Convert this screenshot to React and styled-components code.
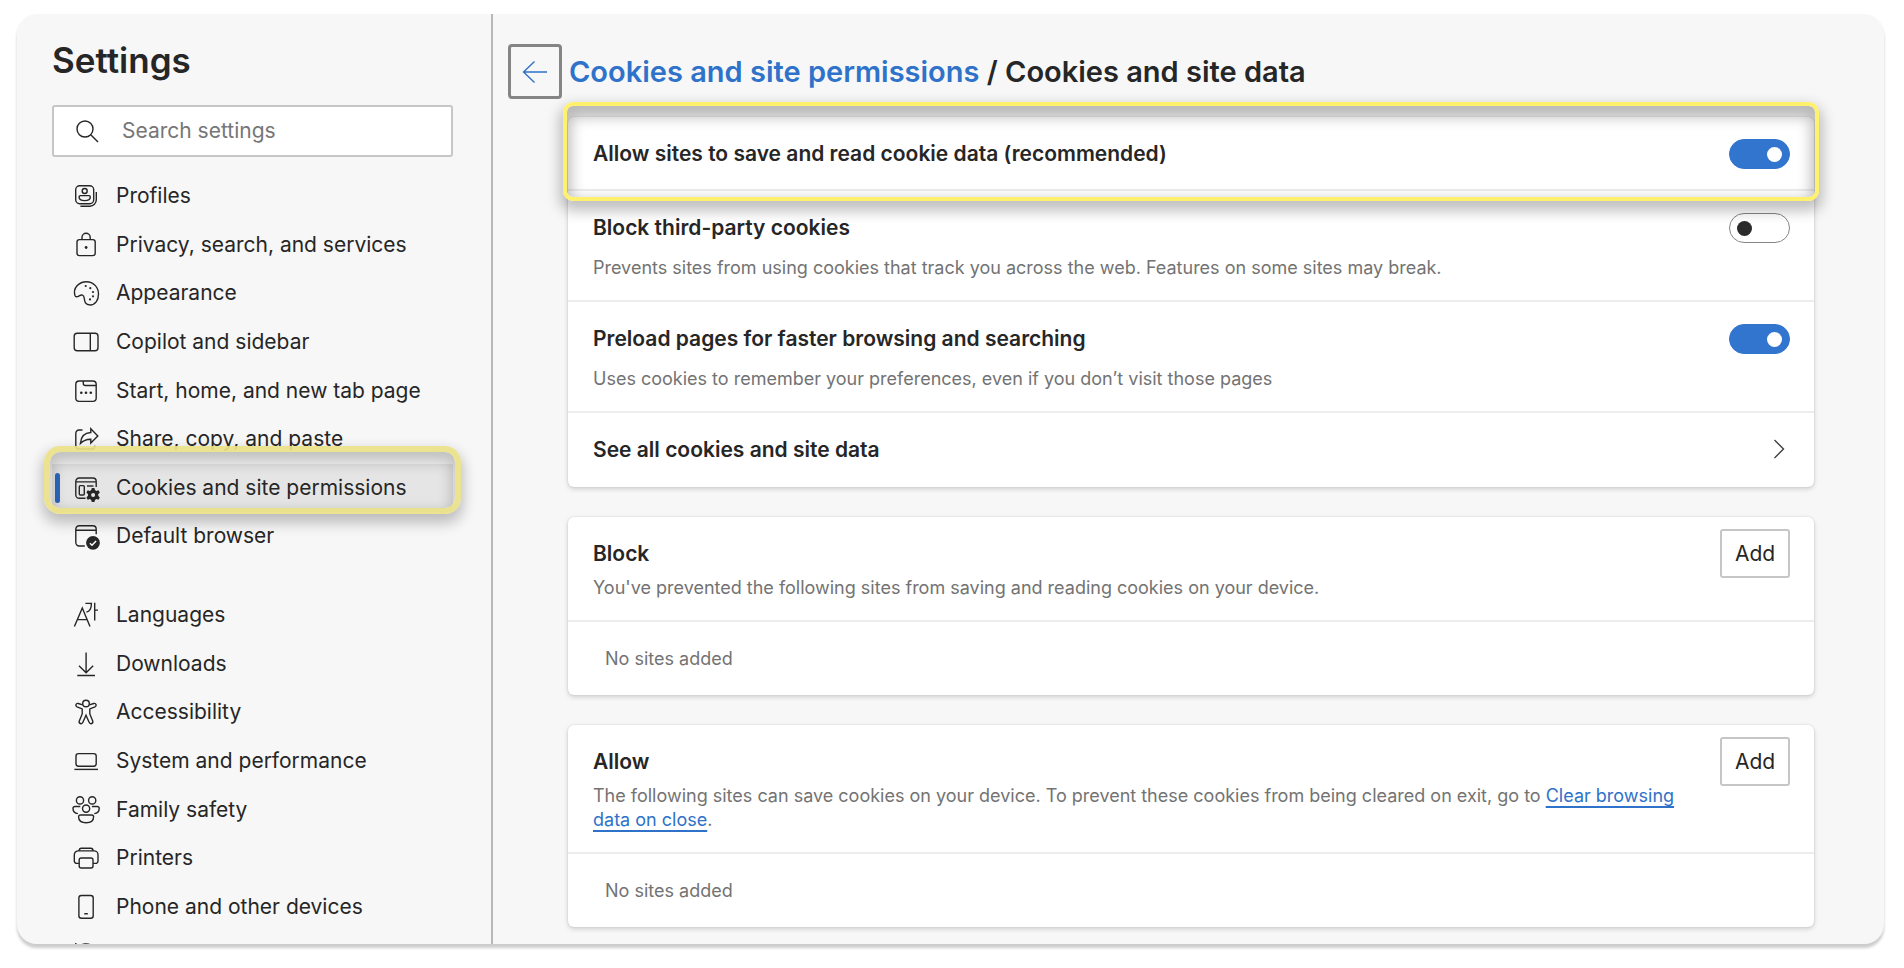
import { useState } from 'react'
import styled, { createGlobalStyle, css } from 'styled-components'

const icons = {
  search: (
    <>
      <circle cx='12' cy='12' r='8' />
      <path d='M18 18l7 7' />
    </>
  ),
  profiles: (
    <>
      <rect x='3.7' y='3.7' width='18' height='18' rx='4' />
      <path d='M24.3 10v7.8a6.4 6.4 0 0 1-6.4 6.4H8.4' />
      <circle cx='12.7' cy='9' r='2.5' />
      <path d='M8.4 13.6H17a1.3 1.3 0 0 1 1.3 1.3c0 2.4-2.4 3.7-5.6 3.7s-5.6-1.3-5.6-3.7a1.3 1.3 0 0 1 1.3-1.3z' />
    </>
  ),
  privacy: (
    <>
      <rect x='5' y='8.6' width='18.2' height='16' rx='2.4' />
      <path d='M10 8.6V6.4a4.1 4.1 0 0 1 8.2 0v2.2' />
      <circle className='dot' cx='14.1' cy='16.5' r='1.4' />
    </>
  ),
  appearance: (
    <>
      <path d='M3 16.6C.6 9 7 2.7 14.5 2.7c7 0 12 5.7 12 12.2 0 6.6-3.4 11.1-8.4 11.1-4.9 0-5.5-3.4-5.9-7-.4-3.2-2.5-3.8-5-2.2-2 1.3-3.7 1.4-4.2-.2z' />
      <circle className='dot' cx='13.7' cy='7' r='1.1' />
      <circle className='dot' cx='18.3' cy='9.2' r='1.1' />
      <circle className='dot' cx='21' cy='13' r='1.1' />
      <circle className='dot' cx='21' cy='17.3' r='1.1' />
      <circle className='dot' cx='18' cy='20.4' r='1.1' />
    </>
  ),
  sidebar: (
    <>
      <rect x='2.2' y='5.2' width='23.8' height='17.6' rx='3' />
      <path d='M18.3 5.2v17.6' />
    </>
  ),
  start: (
    <>
      <rect x='3.8' y='4' width='20.4' height='20.4' rx='3.4' />
      <path d='M11.3 4v2.5a2 2 0 0 0 2 2h10.9' />
      <circle className='dot' cx='9.3' cy='15.7' r='1.3' />
      <circle className='dot' cx='14' cy='15.7' r='1.3' />
      <circle className='dot' cx='18.8' cy='15.7' r='1.3' />
    </>
  ),
  share: (
    <>
      <path d='M10.5 5H7a3.2 3.2 0 0 0-3.2 3.2v12.6A3.2 3.2 0 0 0 7 24h12.6a3.2 3.2 0 0 0 3.2-3.2' />
      <path d='M18.8 3.8l7 7.1-7 7.1v-3.8c-4.6-.1-7.3 1.1-10.4 4.3.4-6 3.8-10.7 10.4-11z' />
    </>
  ),
  cookies: (
    <>
      <path d='M13.5 24.3H7.2a3.4 3.4 0 0 1-3.4-3.4V7.4A3.4 3.4 0 0 1 7.2 4h13.6a3.4 3.4 0 0 1 3.4 3.4v5.6M3.8 7.9h20.4' />
      <rect x='7.3' y='11.6' width='5' height='9.4' rx='1' />
      <path d='M15 12h6.5' />
      <path
        className='solid'
        fillRule='evenodd'
        d='M19.8 14h2.6l.6 2.1 1.3.8 2.2-.6 1.3 2.3-1.6 1.6v1.6l1.6 1.6-1.3 2.3-2.2-.6-1.3.8-.6 2.1h-2.6l-.6-2.1-1.3-.8-2.2.6-1.3-2.3 1.6-1.6v-1.6l-1.6-1.6 1.3-2.3 2.2.6 1.3-.8zM21.1 19a2 2 0 1 0 0 4 2 2 0 0 0 0-4z'
      />
    </>
  ),
  browser: (
    <>
      <path d='M12.8 24H7.2a3.4 3.4 0 0 1-3.4-3.4V7.2a3.4 3.4 0 0 1 3.4-3.4h13.6a3.4 3.4 0 0 1 3.4 3.4v5M3.8 8.2h20.4' />
      <circle className='solid' cx='21' cy='20.8' r='6.9' />
      <path className='check' d='M17.9 21.2l2.1 2.1 4.1-4.4' />
    </>
  ),
  languages: (
    <>
      <path d='M2.4 25.5L10.3 7 18 25.5M4.9 18.6h10.4' />
      <path d='M13.4 2.4h6c0 4.6-1.2 7.7-5 8.8M22.7 1.8v17.6M22.7 9.1H26' />
    </>
  ),
  downloads: <path d='M14.1 2.6v20M7 15.7l7.1 7 7.1-7M5.3 25.5h17.7' />,
  accessibility: (
    <>
      <circle cx='14' cy='5.5' r='3.3' />
      <path d='M10.7 6.9L6.3 5.5C4 4.9 2.8 7.8 5 8.8l5.2 2.1v5L7.3 23c-.8 2.6 2.5 3.7 3.6 1.3l3.1-7 3.1 7c1.1 2.4 4.4 1.3 3.6-1.3l-2.9-7.1v-5L23 8.8c2.2-1 1-3.9-1.3-3.3l-4.4 1.4' />
    </>
  ),
  system: (
    <>
      <rect x='4' y='6.6' width='20.2' height='12.6' rx='2.4' />
      <path d='M2.4 22.4H26' />
    </>
  ),
  family: (
    <>
      <circle cx='8' cy='4.4' r='3.6' />
      <circle cx='20.2' cy='4.4' r='3.6' />
      <circle cx='14.1' cy='12.6' r='3.6' />
      <path d='M8.3 10.5H2.9A1.9 1.9 0 0 0 1 12.4c0 3 1.7 4.7 4.9 5.2M19.9 10.5h5.4a1.9 1.9 0 0 1 1.9 1.9c0 3-1.7 4.7-4.9 5.2' />
      <path d='M8.4 19h11.4a1.8 1.8 0 0 1 1.8 1.8c0 3.7-3 6-7.5 6s-7.5-2.3-7.5-6A1.8 1.8 0 0 1 8.4 19z' />
    </>
  ),
  printers: (
    <>
      <path d='M7.2 6.9V6.4A2.2 2.2 0 0 1 9.4 4.2h9.4A2.2 2.2 0 0 1 21 6.4v.5' />
      <path d='M7.2 19.4H4.8a2.5 2.5 0 0 1-2.5-2.5v-6a4 4 0 0 1 4-4H22a4 4 0 0 1 4 4v6a2.5 2.5 0 0 1-2.5 2.5H21' />
      <rect x='7.2' y='14' width='13.8' height='10' rx='2' />
    </>
  ),
  phone: (
    <>
      <rect x='6.9' y='2.5' width='14.3' height='22.8' rx='2.5' />
      <path d='M12.3 20.8h3.5' />
    </>
  ),
  reset: <path d='M3.8 2v6.5h6.5M4.6 8.4a11 11 0 1 1-1.5 5.6' />,
  back: <path d='M26 14H2.5M13.5 3.5L2.5 14l11 10.5' />,
  chevron: <path d='M9.5 5l9 9-9 9' />,
}

const Icon = ({ name }) => (
  <Svg viewBox='0 0 28 28' aria-hidden='true'>
    {icons[name]}
  </Svg>
)

const browserLinks = [
  { icon: 'profiles', text: 'Profiles' },
  { icon: 'privacy', text: 'Privacy, search, and services' },
  { icon: 'appearance', text: 'Appearance' },
  { icon: 'sidebar', text: 'Copilot and sidebar' },
  { icon: 'start', text: 'Start, home, and new tab page' },
  { icon: 'share', text: 'Share, copy, and paste' },
  { icon: 'cookies', text: 'Cookies and site permissions', active: true },
  { icon: 'browser', text: 'Default browser' },
]

const systemLinks = [
  { icon: 'languages', text: 'Languages' },
  { icon: 'downloads', text: 'Downloads' },
  { icon: 'accessibility', text: 'Accessibility' },
  { icon: 'system', text: 'System and performance' },
  { icon: 'family', text: 'Family safety' },
  { icon: 'printers', text: 'Printers' },
  { icon: 'phone', text: 'Phone and other devices' },
  { icon: 'reset', text: 'Reset settings' },
]

const NavGroup = ({ links }) => (
  <NavList>
    {links.map(({ icon, text, active }) => (
      <li key={text}>
        <NavLink
          href='#'
          $active={active}
          aria-current={active ? 'page' : undefined}
        >
          <Icon name={icon} />
          {text}
        </NavLink>
      </li>
    ))}
  </NavList>
)

const Setting = ({ id, title, info, defaultOn = false, highlight }) => {
  const [on, setOn] = useState(defaultOn)

  return (
    <Row $highlight={highlight}>
      <RowText $gap='15px'>
        <RowTitle as='label' htmlFor={id}>
          {title}
        </RowTitle>
        {info && <Info>{info}</Info>}
      </RowText>
      <Toggle
        id={id}
        type='checkbox'
        role='switch'
        checked={on}
        onChange={(e) => setOn(e.target.checked)}
      />
    </Row>
  )
}

const SiteList = ({ title, children }) => (
  <Card>
    <Row>
      <RowText $gap='9px'>
        <RowTitle as='h2'>{title}</RowTitle>
        <Info>{children}</Info>
      </RowText>
      <AddButton type='button'>Add</AddButton>
    </Row>
    <EmptyRow>No sites added</EmptyRow>
  </Card>
)

const App = () => {
  return (
    <>
      <GlobalStyle />
      <Window>
        <Sidebar>
          <SidebarTitle>Settings</SidebarTitle>
          <SearchBox>
            <Icon name='search' />
            <input
              type='search'
              placeholder='Search settings'
              aria-label='Search settings'
            />
          </SearchBox>
          <nav>
            <NavGroup links={browserLinks} />
            <NavGroup links={systemLinks} />
          </nav>
        </Sidebar>
        <Main>
          <Header>
            <BackButton type='button' aria-label='Back'>
              <Icon name='back' />
            </BackButton>
            <h1>
              <a href='#'>Cookies and site permissions</a> / Cookies and site
              data
            </h1>
          </Header>
          <Cards>
            <Card>
              <Setting
                id='allow-cookies'
                title='Allow sites to save and read cookie data (recommended)'
                defaultOn
                highlight
              />
              <Setting
                id='third-party'
                title='Block third-party cookies'
                info='Prevents sites from using cookies that track you across the web. Features on some sites may break.'
              />
              <Setting
                id='preload'
                title='Preload pages for faster browsing and searching'
                info='Uses cookies to remember your preferences, even if you don’t visit those pages'
                defaultOn
              />
              <Row as='a' href='#'>
                <RowTitle>See all cookies and site data</RowTitle>
                <Chevron>
                  <Icon name='chevron' />
                </Chevron>
              </Row>
            </Card>
            <SiteList title='Block'>
              You've prevented the following sites from saving and reading
              cookies on your device.
            </SiteList>
            <SiteList title='Allow'>
              The following sites can save cookies on your device. To prevent
              these cookies from being cleared on exit, go to{' '}
              <a href='#'>Clear browsing data on close</a>.
            </SiteList>
          </Cards>
        </Main>
      </Window>
    </>
  )
}

const GlobalStyle = createGlobalStyle`
  *,
  *::before,
  *::after {
    box-sizing: border-box;
  }
  body {
    margin: 0;
    background: #fff;
    color: #262626;
    font-family: Inter, 'Liberation Sans', sans-serif;
    font-size: 21px;
    line-height: 26px;
  }
  h1,
  h2,
  p,
  ul {
    margin: 0;
    padding: 0;
  }
  ul {
    list-style: none;
  }
  a {
    color: inherit;
    text-decoration: none;
  }
  button,
  input {
    color: inherit;
    font: inherit;
  }
`

const Svg = styled.svg`
  flex: none;
  width: 28px;
  height: 28px;
  fill: none;
  stroke: currentColor;
  stroke-width: 1.4;
  .dot,
  .solid {
    fill: currentColor;
    stroke: none;
  }
  .check {
    stroke: #fff;
  }
`

const Window = styled.div`
  display: flex;
  height: calc(100vh - 38px);
  margin: 14px 20px 24px 17px;
  overflow: hidden;
  border-radius: 20px;
  background: #f7f7f7;
  box-shadow: 0 4px 3px rgba(0, 0, 0, 0.2);
`

const Sidebar = styled.aside`
  flex: none;
  width: 476px;
  padding: 26px 38px 0 35px;
  border-right: 2px solid #b8b8b8;
`

const SidebarTitle = styled.h2`
  margin-bottom: 25px;
  font-size: 35px;
  font-weight: 600;
  line-height: 40px;
`

const SearchBox = styled.label`
  display: flex;
  align-items: center;
  gap: 21px;
  height: 52px;
  margin-bottom: 15px;
  padding: 0 19px;
  border: 2px solid #c6c6c6;
  border-radius: 3px;
  background: #fff;
  input {
    flex: 1;
    min-width: 0;
    padding: 0;
    border: none;
    outline: none;
    background: transparent;
  }
  input::placeholder {
    color: #767676;
    opacity: 1;
  }
`

const NavList = styled.ul`
  display: grid;
  grid-auto-rows: 1fr;
  min-height: 389px;
  & + & {
    margin-top: 30px;
  }
`

const NavLink = styled.a`
  position: relative;
  display: flex;
  align-items: center;
  gap: 16px;
  height: 48px;
  padding-left: 20px;
  ${({ $active }) =>
    $active &&
    css`
      background: #e5e5e5;
      &::before {
        content: '';
        position: absolute;
        top: 9px;
        left: 3px;
        width: 5px;
        height: 30px;
        border-radius: 3px;
        background: #2a68bd;
      }
      &::after {
        content: '';
        position: absolute;
        z-index: 1;
        inset: -18px -8px -2px;
        border: 6px solid rgba(234, 225, 136, 0.92);
        border-radius: 16px;
        box-shadow: 0 7px 14px 2px rgba(0, 0, 0, 0.24),
          inset 0 7px 14px 3px rgba(0, 0, 0, 0.22);
        pointer-events: none;
      }
    `}
`

const Main = styled.main`
  flex: 1;
  min-width: 0;
  padding: 30px 70px 0 15px;
`

const Header = styled.header`
  display: flex;
  align-items: center;
  gap: 7px;
  margin-bottom: 18px;
  h1 {
    font-size: 29px;
    font-weight: 600;
    line-height: 40px;
  }
  a {
    color: #2f72c9;
  }
`

const BackButton = styled.button`
  display: grid;
  place-items: center;
  width: 54px;
  height: 55px;
  padding: 0;
  border: 3px solid #858585;
  border-radius: 4px;
  background: transparent;
  color: #2f72c9;
`

const Cards = styled.div`
  display: grid;
  gap: 30px;
  margin-left: 60px;
`

const Card = styled.section`
  border-radius: 6px;
  background: #fff;
  box-shadow: 0 0 2px rgba(0, 0, 0, 0.12), 0 2px 5px rgba(0, 0, 0, 0.16);
`

const Row = styled.div`
  position: relative;
  display: flex;
  justify-content: space-between;
  align-items: flex-start;
  min-height: 74px;
  padding: 24px 24px 20px 25px;
  &:not(:last-child) {
    border-bottom: 2px solid #ededed;
  }
  ${({ $highlight }) =>
    $highlight &&
    css`
      &::after {
        content: '';
        position: absolute;
        z-index: 1;
        inset: -15px -5px -12px;
        border: 4px solid #fff06e;
        border-radius: 10px;
        box-shadow: 0 7px 14px 3px rgba(0, 0, 0, 0.25),
          inset 0 7px 14px 4px rgba(0, 0, 0, 0.26);
        pointer-events: none;
      }
    `}
`

const RowText = styled.div`
  display: grid;
  gap: ${({ $gap }) => $gap};
`

const RowTitle = styled.span`
  font-size: 21px;
  font-weight: 600;
  line-height: 26px;
`

const Info = styled.p`
  color: #737373;
  font-size: 18px;
  line-height: 24px;
  a {
    color: #2f72c9;
    text-decoration: underline;
    text-decoration-thickness: 2px;
    text-underline-offset: 4px;
    text-decoration-skip-ink: none;
  }
`

const EmptyRow = styled(Info)`
  padding: 25px 37px 24px;
`

const Toggle = styled.input`
  appearance: none;
  flex: none;
  display: flex;
  align-items: center;
  width: 61px;
  height: 30px;
  margin: -2px 0;
  padding: 0 7px;
  border: 1px solid #858585;
  border-radius: 15px;
  background: #fff;
  cursor: pointer;
  &::before {
    content: '';
    width: 15px;
    height: 15px;
    border-radius: 50%;
    background: #2b2b2b;
  }
  &:checked {
    justify-content: flex-end;
    border-color: #3275ce;
    background: #3275ce;
  }
  &:checked::before {
    background: #fff;
  }
`

const AddButton = styled.button`
  flex: none;
  width: 70px;
  height: 49px;
  margin: -12px 0 -12px 20px;
  padding: 0;
  border: 2px solid #c6c6c6;
  border-radius: 3px;
  background: #fff;
`

const Chevron = styled.span`
  display: flex;
  margin: -2px -3px -2px 0;
  color: #404040;
`

export default App
